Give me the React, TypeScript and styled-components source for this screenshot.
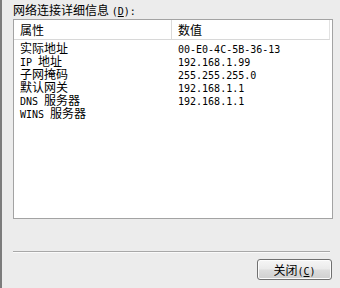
import React from 'react'
import styled, { createGlobalStyle } from 'styled-components'

const GlobalStyle = createGlobalStyle`
  html, body {
    margin: 0;
    padding: 0;
    background: #ececec;
  }
`

const Window = styled.div`
  box-sizing: border-box;
  width: 340px;
  height: 288px;
  display: flex;
  flex-direction: column;
  padding: 3px 7px 0 11px;
  background: #ececec;
  border-left: 2px solid #7c7c7c;
  color: #000;
  font-family: "Noto Sans CJK SC", sans-serif;
  font-size: 12px;
`

const Caption = styled.div`
  height: 14px;
  line-height: 14px;
  white-space: nowrap;
`

const ListBox = styled.div`
  box-sizing: border-box;
  margin-top: 2px;
  width: 320px;
  height: 200px;
  background: #fff;
  border: 1px solid #a3a3a3;
  padding: 0 2px 0 0;
`

const Grid = styled.div`
  display: grid;
  grid-template-columns: 158px 1fr;
`

const HeadCell = styled.div<{ $last?: boolean }>`
  height: 20px;
  line-height: 20px;
  padding-left: 6px;
  border-bottom: 1px solid #d8d8d8;
  border-right: 1px solid ${p => (p.$last ? '#e2e2e2' : '#dadada')};
  box-sizing: border-box;
`

const Cell = styled.div`
  height: 13px;
  line-height: 13px;
  padding-left: 6px;
  white-space: nowrap;
  &:nth-child(-n + 4) {
    margin-top: 1px;
  }
`

const Han = styled.span`
  font-family: "Noto Sans CJK SC", sans-serif;
  font-size: 12px;
`

const Latin = styled.span`
  font-family: "DejaVu Sans Mono", monospace;
  font-size: 10px;
`

const Key = styled.span`
  text-decoration: underline;
  text-underline-offset: 1px;
`

const Separator = styled.div`
  margin-top: 32px;
  width: 317px;
  height: 1px;
  background: #a8a8a8;
  border-bottom: 1px solid #fafafa;
`

const Footer = styled.div`
  display: flex;
  justify-content: flex-end;
  padding-right: 1px;
  margin-top: 6px;
`

const Button = styled.button`
  box-sizing: border-box;
  width: 75px;
  height: 21px;
  padding: 0;
  border: 1px solid #707070;
  border-radius: 3px;
  background: linear-gradient(#f6f6f6 0%, #ebebeb 45%, #dcdcdc 55%, #cfcfcf 100%);
  box-shadow: inset 0 0 0 1px #fcfcfc;
  font-family: "Noto Sans CJK SC", sans-serif;
  font-size: 12px;
  line-height: 19px;
  color: #000;
`

const rows: [string, string][] = [
  ['实际地址', '00-E0-4C-5B-36-13'],
  ['IP 地址', '192.168.1.99'],
  ['子网掩码', '255.255.255.0'],
  ['默认网关', '192.168.1.1'],
  ['DNS 服务器', '192.168.1.1'],
  ['WINS 服务器', ''],
]

const mixed = (text: string) =>
  text.split(/([\u4e00-\u9fff]+)/).filter(Boolean).map((part, i) =>
    /[\u4e00-\u9fff]/.test(part) ? <Han key={i}>{part}</Han> : <Latin key={i}>{part}</Latin>
  )

export default function App() {
  return (
    <Window>
      <GlobalStyle />
      <Caption>
        网络连接详细信息 <Latin>(<Key>D</Key>):</Latin>
      </Caption>
      <ListBox>
        <Grid>
          <HeadCell>属性</HeadCell>
          <HeadCell $last>数值</HeadCell>
          {rows.map(([name, value]) => (
            <React.Fragment key={name}>
              <Cell>{mixed(name)}</Cell>
              <Cell>{mixed(value)}</Cell>
            </React.Fragment>
          ))}
        </Grid>
      </ListBox>
      <Separator />
      <Footer>
        <Button>
          关闭<Latin>(<Key>C</Key>)</Latin>
        </Button>
      </Footer>
    </Window>
  )
}
